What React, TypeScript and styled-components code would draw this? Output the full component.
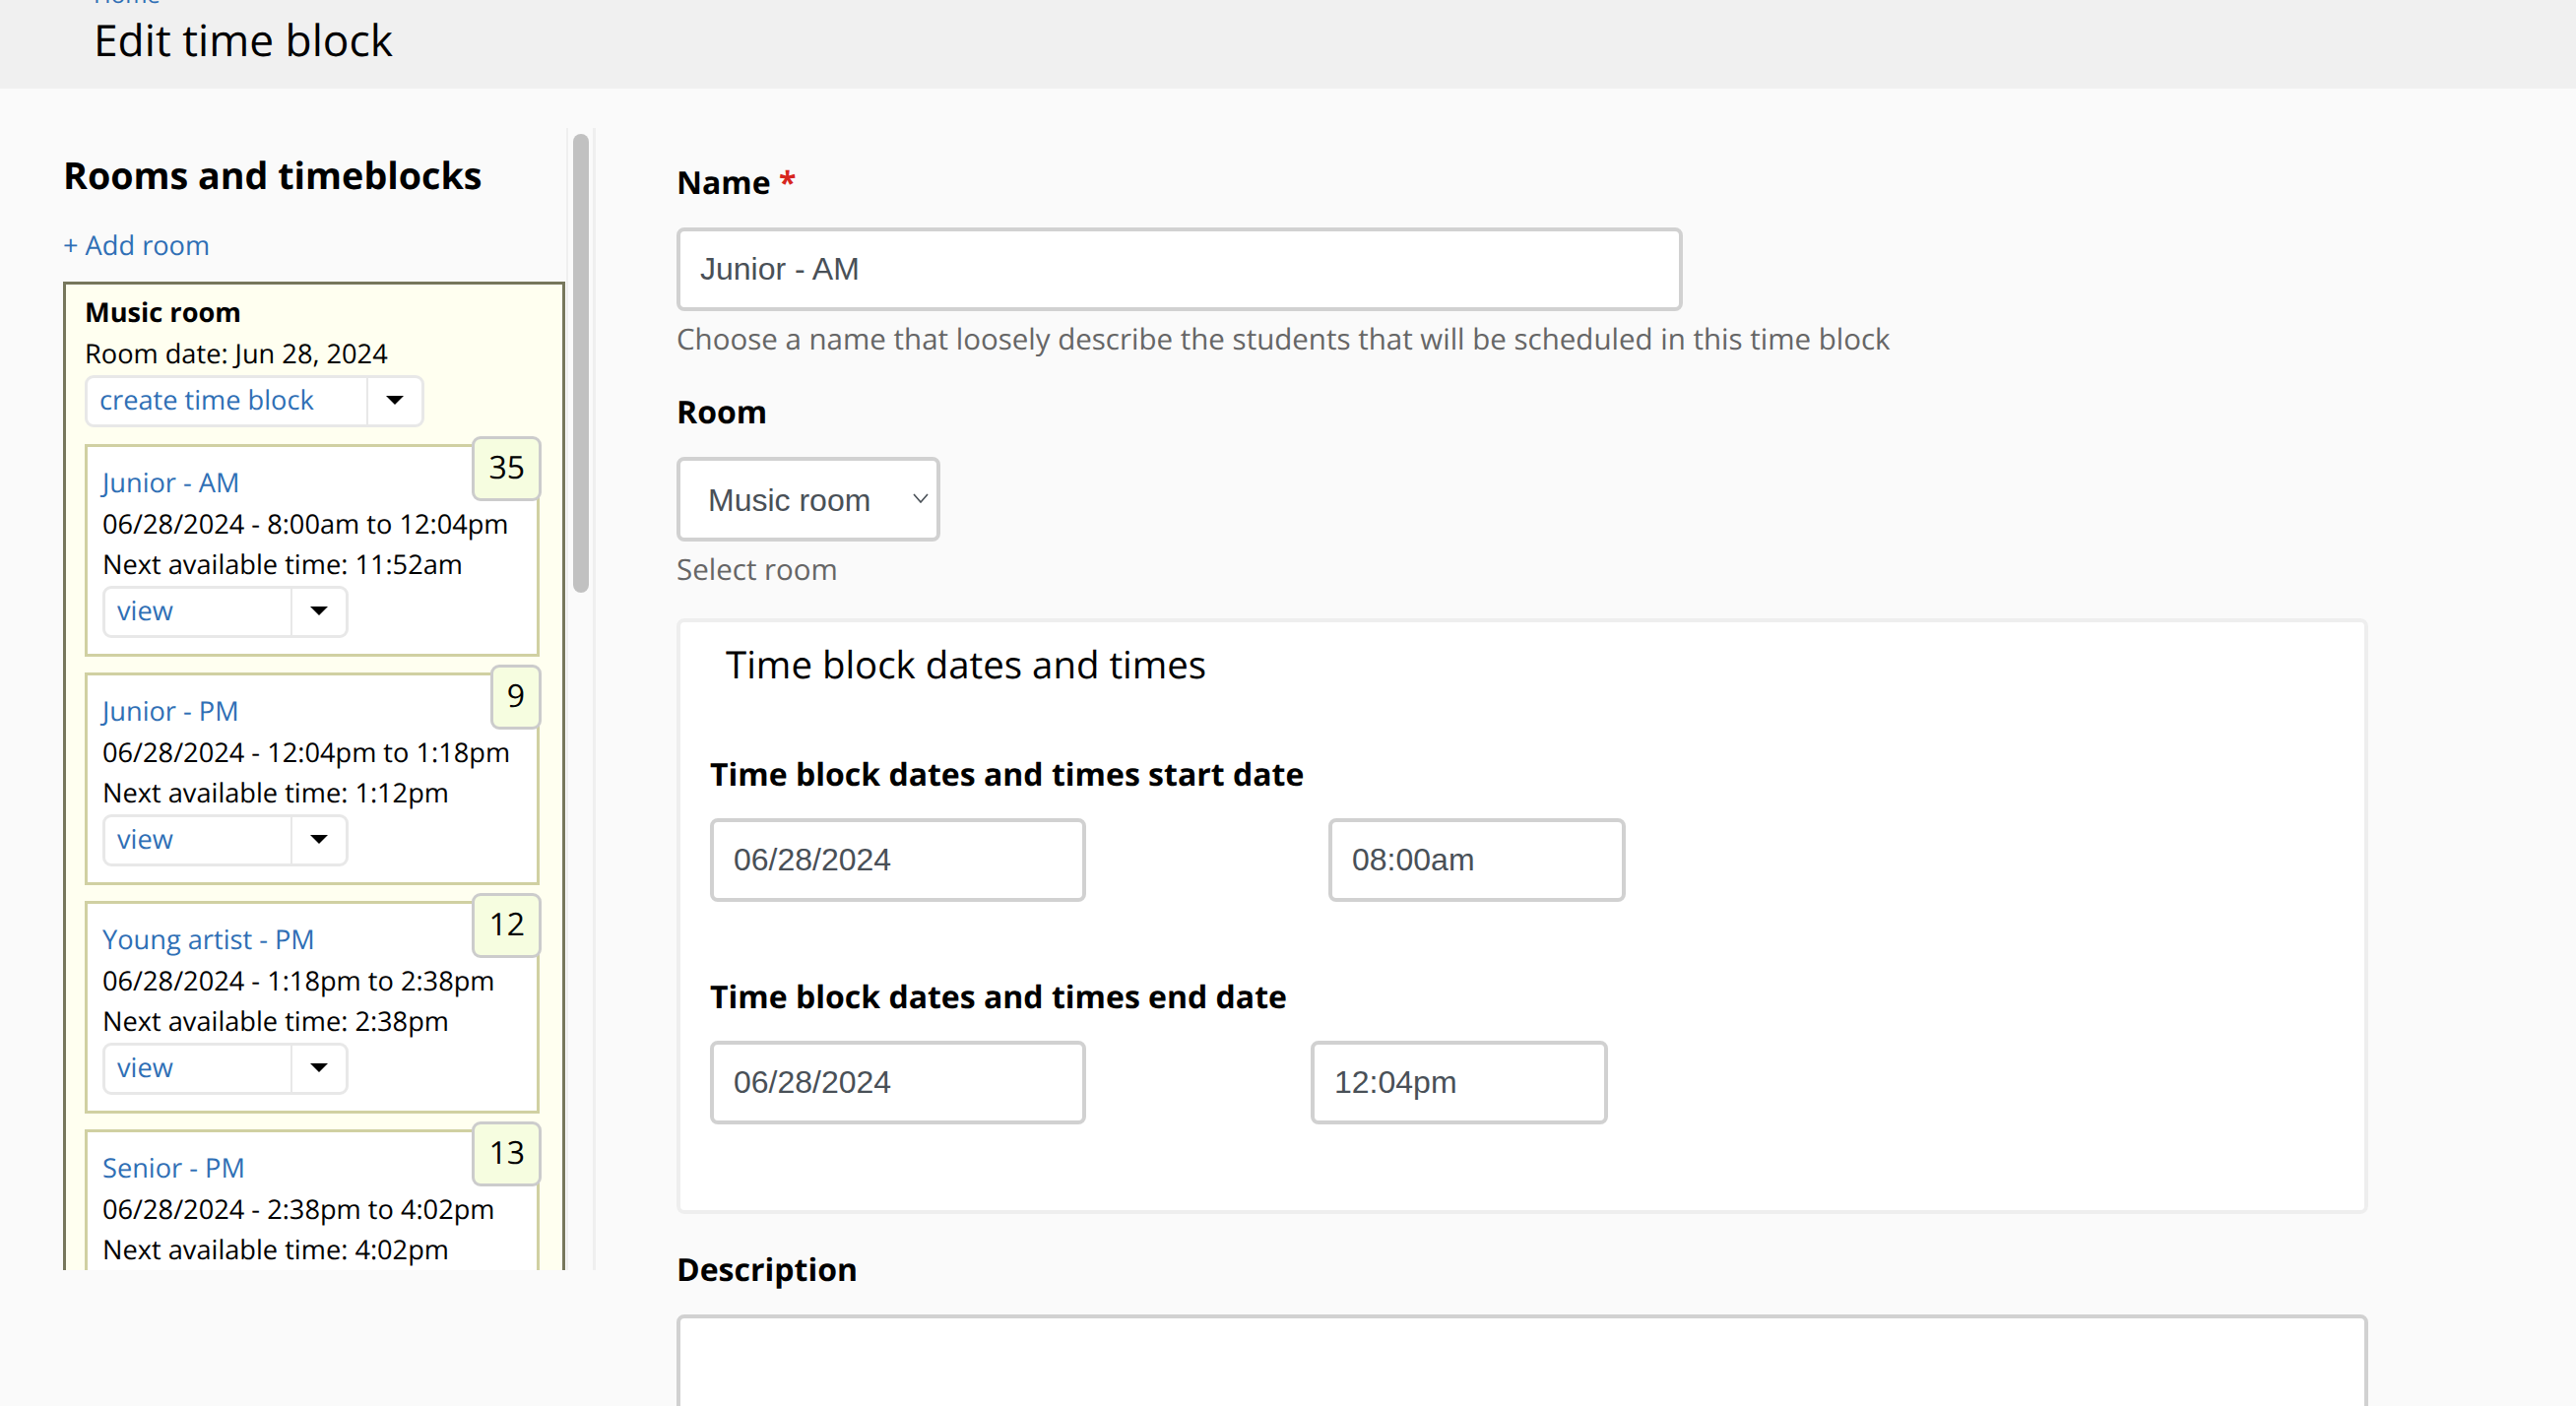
import styled, { createGlobalStyle } from 'styled-components'

const GlobalStyle = createGlobalStyle`
html, body {
  margin: 0;
  padding: 0;
  background: #fafafa;
  overflow: hidden;
}
body {
  font-family: "Open Sans", "Liberation Sans", sans-serif;
  color: #000000;
  text-rendering: geometricPrecision;
}
* { box-sizing: border-box; }
a { text-decoration: none; }
`

const Page = styled.div`
width: 2616px;
height: 1428px;
overflow: hidden;
background: #fafafa;
`

const Header = styled.header`
height: 90px;
background: #f0f0f0;
display: flex;
flex-direction: column;
justify-content: flex-end;
overflow: hidden;
padding: 0 0 20px 95px;
`

const Crumb = styled.a`
font-size: 24px;
line-height: 30px;
color: #2f6fb5;
`

const PageTitle = styled.h1`
margin: 0;
font-size: 44.3px;
font-weight: 400;
line-height: 60px;
`

const Main = styled.main`
display: flex;
align-items: flex-start;
`

const SidePanel = styled.aside`
display: flex;
width: 605px;
height: 1160px;
margin-top: 40px;
flex-shrink: 0;
`

const SideContent = styled.div`
width: 575px;
height: 100%;
overflow: hidden;
padding: 26px 0 0 64px;
`

const SideTitle = styled.h2`
margin: 0;
font-size: 37.7px;
font-weight: 700;
line-height: 46px;
`

const AddRoom = styled.a`
display: block;
margin: 27px 0 17px;
font-size: 27.2px;
line-height: 40px;
color: #2f6fb5;
`

const RoomBox = styled.section`
width: 510px;
border: 3px solid #77775c;
background: #fffff0;
padding: 7px 22px 0 19px;
font-size: 27.2px;
line-height: 42px;
`

const RoomName = styled.div`
font-weight: 700;
`

const BtnGroup = styled.div<{ $main: number }>`
display: flex;
height: 53px;
width: fit-content;
background: #ffffff;
border: 3px solid #e8e8e8;
border-radius: 9px;
margin-top: 1px;
font-size: 27.2px;
line-height: 44px;
color: #2f6fb5;
& > span:first-child {
  width: ${props => props.$main}px;
  padding-left: 12px;
  border-right: 2px solid #e8e8e8;
}
`

const CaretBox = styled.span`
display: flex;
align-items: center;
justify-content: center;
width: 54px;
padding-bottom: 2px;
&::after {
  content: '';
  border-left: 9px solid transparent;
  border-right: 9px solid transparent;
  border-top: 9px solid #000000;
}
`

const Card = styled.article`
position: relative;
width: 462px;
height: 216px;
margin: 16px 0 0 0;
background: #ffffff;
border: 3px solid #d0d0a2;
padding: 15px 0 0 15px;
font-size: 27.2px;
line-height: 41px;
white-space: nowrap;
&:first-of-type { margin-top: 17px; }
`

const CardLink = styled.a`
display: block;
line-height: 42px;
color: #2f6fb5;
`

const CardButtons = styled(BtnGroup)`
margin-top: 2px;
`

const Badge = styled.span`
position: absolute;
top: -11px;
right: -5px;
height: 66px;
padding: 0 14px;
background: #f6fde0;
border: 3px solid #cccccc;
border-radius: 9px;
font-size: 32px;
line-height: 58px;
`

const ScrollTrack = styled.div`
width: 30px;
height: 100%;
padding: 6px 0 0 5px;
border-left: 2px solid #efefef;
border-right: 3px solid #efefef;
`

const ScrollThumb = styled.div`
width: 16px;
height: 466px;
border-radius: 8px;
background: #c1c1c1;
`

const Form = styled.form`
width: 1718px;
margin-left: 82px;
padding-top: 74px;
flex-shrink: 0;
`

const FieldLabel = styled.label<{ $top?: number; $bottom?: number }>`
display: block;
margin-top: ${props => props.$top || 0}px;
margin-bottom: ${props => props.$bottom || 23}px;
font-size: 32px;
font-weight: 700;
line-height: 44px;
`

const Required = styled.span`
color: #d7261e;
`

const TextInput = styled.input<{ $width: number }>`
display: block;
width: ${props => props.$width}px;
height: 85px;
padding: 0 20px;
background: #ffffff;
border: 4px solid #d1d1d1;
border-radius: 8px;
font-family: "Liberation Sans", Arial, sans-serif;
font-size: 32px;
color: #495057;
outline: none;
`

const Help = styled.div`
margin-top: 7px;
font-size: 29.5px;
line-height: 42px;
color: #666666;
`

const SelectWrap = styled.div`
position: relative;
width: 268px;
height: 86px;
& > svg {
  position: absolute;
  right: 12px;
  top: 37px;
}
`

const RoomSelect = styled.select`
display: block;
width: 100%;
height: 100%;
padding: 2px 0 0 28px;
appearance: none;
background: #ffffff;
border: 4px solid #d1d1d1;
border-radius: 8px;
font-family: "Liberation Sans", Arial, sans-serif;
font-size: 32px;
color: #495057;
outline: none;
`

const DatesBox = styled.fieldset`
height: 605px;
margin: 29px 0 0 0;
padding: 16px 30px 0;
background: #ffffff;
border: 4px solid #eeeeee;
border-radius: 8px;
`

const DatesTitle = styled.div`
padding-left: 16px;
font-size: 38.4px;
line-height: 54px;
`

const DateRow = styled.div<{ $gap: number }>`
display: flex;
gap: ${props => props.$gap}px;
`

const NoteArea = styled.textarea`
display: block;
width: 100%;
height: 300px;
background: #ffffff;
border: 4px solid #d1d1d1;
border-radius: 8px;
resize: none;
outline: none;
`

const blocks = [
  { name: 'Junior - AM', range: '06/28/2024 - 8:00am to 12:04pm', next: '11:52am', count: 35 },
  { name: 'Junior - PM', range: '06/28/2024 - 12:04pm to 1:18pm', next: '1:12pm', count: 9 },
  { name: 'Young artist - PM', range: '06/28/2024 - 1:18pm to 2:38pm', next: '2:38pm', count: 12 },
  { name: 'Senior - PM', range: '06/28/2024 - 2:38pm to 4:02pm', next: '4:02pm', count: 13 },
]

const App = () => {
  return (
    <Page>
      <GlobalStyle />
      <Header>
        <Crumb href="#">Home</Crumb>
        <PageTitle>Edit time block</PageTitle>
      </Header>
      <Main>
        <SidePanel>
          <SideContent>
            <SideTitle>Rooms and timeblocks</SideTitle>
            <AddRoom href="#">+ Add room</AddRoom>
            <RoomBox>
              <RoomName>Music room</RoomName>
              <div>Room date: Jun 28, 2024</div>
              <BtnGroup $main={285}>
                <span>create time block</span>
                <CaretBox />
              </BtnGroup>
              {blocks.map(block => (
                <Card key={block.name}>
                  <CardLink href="#">{block.name}</CardLink>
                  <div>{block.range}</div>
                  <div>Next available time: {block.next}</div>
                  <CardButtons $main={190}>
                    <span>view</span>
                    <CaretBox />
                  </CardButtons>
                  <Badge>{block.count}</Badge>
                </Card>
              ))}
            </RoomBox>
          </SideContent>
          <ScrollTrack>
            <ScrollThumb />
          </ScrollTrack>
        </SidePanel>
        <Form>
          <FieldLabel>Name <Required>*</Required></FieldLabel>
          <TextInput $width={1022} readOnly value="Junior - AM" />
          <Help>Choose a name that loosely describe the students that will be scheduled in this time block</Help>
          <FieldLabel $top={32}>Room</FieldLabel>
          <SelectWrap>
            <RoomSelect defaultValue="music">
              <option value="music">Music room</option>
            </RoomSelect>
            <svg width="16" height="10" viewBox="0 0 16 10" fill="none" stroke="#495057" strokeWidth="1.6">
              <path d="M1 1l7 8 7-8" />
            </svg>
          </SelectWrap>
          <Help>Select room</Help>
          <DatesBox>
            <DatesTitle>Time block dates and times</DatesTitle>
            <FieldLabel $top={63} $bottom={22}>Time block dates and times start date</FieldLabel>
            <DateRow $gap={246}>
              <TextInput $width={382} readOnly value="06/28/2024" />
              <TextInput $width={302} readOnly value="08:00am" />
            </DateRow>
            <FieldLabel $top={75} $bottom={22}>Time block dates and times end date</FieldLabel>
            <DateRow $gap={228}>
              <TextInput $width={382} readOnly value="06/28/2024" />
              <TextInput $width={302} readOnly value="12:04pm" />
            </DateRow>
          </DatesBox>
          <FieldLabel $top={35}>Description</FieldLabel>
          <NoteArea />
        </Form>
      </Main>
    </Page>
  )
}

export default App
